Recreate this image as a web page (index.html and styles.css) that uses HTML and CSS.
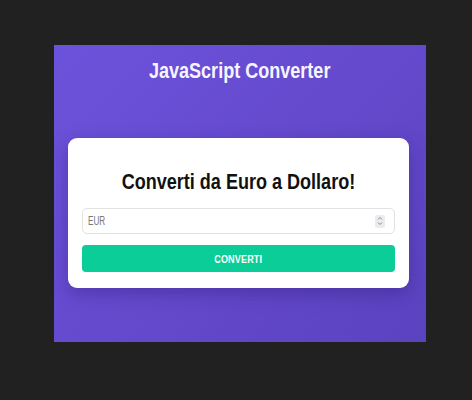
FILE: index.html
```html
<!DOCTYPE html>
<html lang="it">
<head>
<meta charset="utf-8">
<title>JavaScript Converter</title>
<link rel="stylesheet" href="styles.css">
</head>
<body>
  <main class="panel">
    <h1 class="title"><span class="narrow">JavaScript Converter</span></h1>
    <section class="card">
      <h2 class="heading"><span class="narrow">Converti da Euro a Dollaro!</span></h2>
      <div class="field">
        <input class="amount" type="text" placeholder="EUR">
        <span class="spin">
          <svg width="10" height="12" viewBox="0 0 10 12"><path d="M3 4.5 L5 2.5 L7 4.5 M3 7.5 L5 9.5 L7 7.5" fill="none" stroke="#8a8a8a" stroke-width="1"/></svg>
        </span>
      </div>
      <button class="btn" type="button"><span class="narrow">CONVERTI</span></button>
    </section>
  </main>
</body>
</html>
```
FILE: styles.css
```css
* { box-sizing: border-box; }
html, body { margin: 0; padding: 0; }
body {
  background: #212121;
  width: 472px;
  height: 400px;
  padding: 45px 0 0 54px;
  font-family: "Liberation Sans", Arial, sans-serif;
}
.narrow {
  display: inline-block;
  transform: scaleX(0.82);
  white-space: nowrap;
}
.panel {
  width: 372px;
  height: 297px;
  background: linear-gradient(135deg, #6c53db 0%, #6449cc 55%, #5a43bf 100%);
  padding: 13px 17px 0 14px;
}
.title {
  margin: 0;
  font-size: 22px;
  line-height: 25px;
  font-weight: bold;
  color: #f6f4ff;
  text-align: center;
  padding-left: 3px;
}
.card {
  margin-top: 55px;
  width: 341px;
  height: 150px;
  background: #ffffff;
  border-radius: 9px;
  box-shadow: 0 6px 18px rgba(40, 20, 110, 0.35);
  padding: 31px 14px 16px 14px;
}
.heading {
  margin: 0;
  font-size: 22px;
  line-height: 25px;
  font-weight: bold;
  color: #111111;
  text-align: center;
}
.field {
  margin-top: 14px;
  height: 26px;
  border: 1.5px solid #e2e2e2;
  border-radius: 5px;
  display: flex;
  align-items: center;
  padding: 0 9px 0 5px;
}
.amount {
  flex: 1;
  min-width: 0;
  border: none;
  outline: none;
  background: transparent;
  font-family: "Liberation Sans", Arial, sans-serif;
  font-size: 12px;
  color: #333;
  padding: 0;
  transform: scaleX(0.68);
  transform-origin: left center;
}
.amount::placeholder { color: #767676; }
.spin {
  width: 10px;
  height: 13px;
  background: #ececf0;
  border-radius: 2px;
  display: flex;
  align-items: center;
  justify-content: center;
}
.btn {
  display: block;
  margin-top: 11px;
  width: 100%;
  height: 27px;
  border: none;
  border-radius: 4px;
  background: #0acd97;
  color: #ffffff;
  font-family: "Liberation Sans", Arial, sans-serif;
  font-size: 11px;
  font-weight: bold;
  letter-spacing: 0.2px;
  padding: 0;
}
```
